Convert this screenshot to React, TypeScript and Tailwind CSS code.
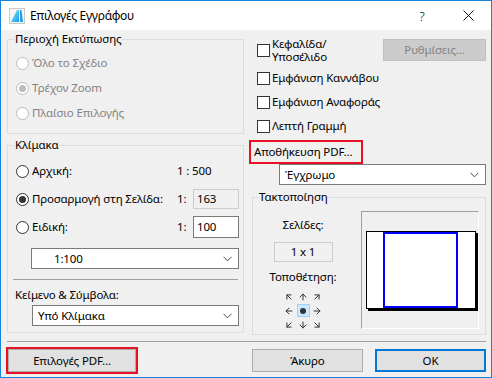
import { ArrowUpLeft, ArrowUp, ArrowUpRight, ArrowLeft, ArrowRight, ArrowDownLeft, ArrowDown, ArrowDownRight } from 'lucide-react';

function Radio({ label, checked, disabled }: { label: string; checked?: boolean; disabled?: boolean }) {
  return (
    <div className="flex items-center h-full">
      <span className={`ml-[1px] w-[13px] h-[13px] rounded-full border bg-white flex items-center justify-center shrink-0 ${disabled ? 'border-[#bcbcbc]' : 'border-[#333333]'}`}>
        {checked && <span className={`w-[7px] h-[7px] rounded-full ${disabled ? 'bg-[#bcbcbc]' : 'bg-[#333333]'}`} />}
      </span>
      <span className={`ml-[3px] whitespace-nowrap ${disabled ? 'text-[#838383]' : 'text-black'}`}>{label}</span>
    </div>
  );
}

function Check({ children }: { children: React.ReactNode }) {
  return (
    <div className="flex items-center">
      <span className="w-[13px] h-[13px] border border-[#333333] bg-white shrink-0" />
      <span className="ml-[2px] whitespace-nowrap">{children}</span>
    </div>
  );
}

function Chevron() {
  return (
    <svg width="9" height="6" viewBox="0 0 9 6" className="shrink-0">
      <path d="M0.5 0.8 L4.5 4.8 L8.5 0.8" fill="none" stroke="#444" strokeWidth="1" />
    </svg>
  );
}

function Select({ value, className, textPad }: { value: string; className?: string; textPad: string }) {
  return (
    <div className={`h-[21px] border border-[#7a7a7a] bg-white flex items-center pr-[6px] ${className ?? ''}`}>
      <span className={`flex-1 ${textPad}`}>{value}</span>
      <Chevron />
    </div>
  );
}

function Btn({ label, className }: { label: string; className?: string }) {
  return (
    <div className={`h-[23px] bg-[#e1e1e1] flex items-center justify-center ${className ?? ''}`}>{label}</div>
  );
}

export default function App() {
  const arrows = [ArrowUpLeft, ArrowUp, ArrowUpRight, ArrowLeft, null, ArrowRight, ArrowDownLeft, ArrowDown, ArrowDownRight];

  return (
    <div className="w-[492px] h-[378px] border border-[#1883d7] bg-[#f0f0f0] flex flex-col font-['Noto_Sans',sans-serif] text-[11.5px] tracking-[-0.15px] leading-[16px] text-black overflow-hidden">
      {/* title bar */}
      <div className="h-[29px] bg-white flex items-center shrink-0 text-[12px]">
        <svg width="16" height="16" viewBox="0 0 16 16" className="ml-[8px]">
          <defs>
            <linearGradient id="ac" x1="0" y1="0" x2="1" y2="1">
              <stop offset="0" stopColor="#8ff0ff" />
              <stop offset="1" stopColor="#1597e5" />
            </linearGradient>
          </defs>
          <rect x="0.5" y="0.5" width="15" height="15" fill="#f6f6f6" stroke="#c9c9c9" />
          <polygon points="2,14 8,2 10,2 10,14" fill="url(#ac)" />
          <polygon points="11,2 12.5,2 14,14 11,14" fill="#1aa0e6" />
        </svg>
        <span className="ml-[5px] tracking-[-0.3px]">Επιλογές Εγγράφου</span>
        <div className="ml-auto flex h-full">
          <div className="w-[46px] flex items-center justify-center text-[13px] font-light">?</div>
          <div className="w-[46px] flex items-center justify-center">
            <svg width="11" height="11" viewBox="0 0 11 11">
              <path d="M0.5 0.5 L10.5 10.5 M10.5 0.5 L0.5 10.5" stroke="#111" strokeWidth="1" />
            </svg>
          </div>
        </div>
      </div>

      {/* body */}
      <div className="flex pl-[6px] pt-[1px] shrink-0">
        {/* left column */}
        <div className="w-[237px] flex flex-col">
          <fieldset className="border border-[#dcdcdc] pl-[7px] pr-[4px] pt-[6px] pb-[10px]">
            <legend className="px-[1px] -ml-[1px]">Περιοχή Εκτύπωσης</legend>
            <div className="flex flex-col gap-[5px]">
              <div className="h-[20px]"><Radio label="Όλο το Σχέδιο" disabled /></div>
              <div className="h-[20px]"><Radio label="Τρέχον Zoom" disabled checked /></div>
              <div className="h-[20px]"><Radio label="Πλαίσιο Επιλογής" disabled /></div>
            </div>
          </fieldset>

          <fieldset className="mt-[3px] border border-[#dcdcdc] pl-[7px] pr-[4px] pt-[7px] pb-[6px]">
            <legend className="px-[1px] -ml-[1px]">Κλίμακα</legend>
            <div className="flex flex-col gap-[6px]">
              <div className="h-[22px] flex items-center">
                <div className="w-[162px] h-full"><Radio label="Αρχική:" /></div>
                <span>1 : 500</span>
              </div>
              <div className="h-[22px] flex items-center">
                <div className="w-[162px] h-full"><Radio label="Προσαρμογή στη Σελίδα:" checked /></div>
                <span className="w-[16px]">1:</span>
                <div className="w-[46px] h-[20px] border border-[#cccccc] bg-[#f0f0f0] flex items-center pl-[3px]">163</div>
              </div>
              <div className="h-[22px] flex items-center">
                <div className="w-[162px] h-full"><Radio label="Ειδική:" /></div>
                <span className="w-[16px]">1:</span>
                <div className="w-[46px] h-[22px] border border-[#7a7a7a] bg-white flex items-center pl-[3px]">100</div>
              </div>
            </div>
            <Select value="1:100" className="mt-[10px] ml-[16px]" textPad="pl-[22px]" />
            <div className="mt-[10px] h-px bg-[#a0a0a0] -ml-[2px] mr-[1px]" />
            <div className="mt-[7px]">Κείμενο &amp; Σύμβολα:</div>
            <Select value="Υπό Κλίμακα" className="mt-[2px] ml-[17px]" textPad="pl-[5px]" />
          </fieldset>
        </div>

        {/* right column */}
        <div className="w-[237px] ml-[5px] flex flex-col">
          <div className="h-[26px] mt-[6px] pl-[8px] flex items-center">
            <span className="w-[13px] h-[13px] border border-[#333333] bg-white shrink-0" />
            <span className="ml-[2px] w-[64px] leading-[13px]">Κεφαλίδα/ Υποσέλιδο</span>
            <div className="ml-auto w-[103px] h-[22px] bg-[#cccccc] border border-[#bfbfbf] text-[#838383] flex items-center justify-center">Ρυθμίσεις...</div>
          </div>
          <div className="h-[22px] mt-[4px] pl-[8px] flex items-center"><Check>Εμφάνιση Καννάβου</Check></div>
          <div className="h-[22px] mt-[2px] pl-[8px] flex items-center"><Check>Εμφάνιση Αναφοράς</Check></div>
          <div className="h-[22px] mt-[2px] pl-[8px] flex items-center"><Check>Λεπτή Γραμμή</Check></div>
          <div className="mt-[3px] w-[114px] h-[24px] border-2 border-[#e81123] flex items-center pl-[3px]">Αποθήκευση PDF...</div>
          <Select value="Έγχρωμο" className="ml-[30px]" textPad="pl-[5px]" />

          <fieldset className="mt-[4px] ml-[3px] border border-[#dcdcdc] pl-[6px] pr-[6px] pt-[6px] pb-[3px]">
            <legend className="px-[1px] -ml-[1px]">Τακτοποίηση</legend>
            <div className="flex">
              <div className="w-[88px] flex flex-col items-center">
                <div className="mt-[6px]">Σελίδες:</div>
                <div className="mt-[9px] w-[59px] h-[20px] border border-[#cccccc] flex items-center justify-center">1 x 1</div>
                <div className="mt-[7px]">Τοποθέτηση:</div>
                <div className="mt-[5px] grid grid-cols-3 gap-[1px]">
                  {arrows.map((A, i) =>
                    A ? (
                      <div key={i} className="w-[13px] h-[13px] flex items-center justify-center">
                        <A size={10} strokeWidth={2.4} color="#333333" />
                      </div>
                    ) : (
                      <div key={i} className="w-[13px] h-[13px] bg-[#cce8ff] border border-[#99d1ff] flex items-center justify-center">
                        <span className="w-[6px] h-[6px] rounded-full bg-[#333333]" />
                      </div>
                    )
                  )}
                </div>
              </div>
              <div className="ml-[14px] w-[118px] h-[118px] border-t border-l border-[#a0a0a0] border-r-white border-b-white border-r border-b flex flex-col items-center">
                <div className="mt-[19px] ml-[1px] w-[110px] h-[78px] border border-black bg-white shadow-[2px_2px_0_0_#000] flex justify-center">
                  <div className="w-[75px] h-full border-2 border-[#0000ff]" />
                </div>
              </div>
            </div>
          </fieldset>
        </div>
      </div>

      <div className="mt-[6px] ml-[6px] mr-[5px] h-px bg-[#a0a0a0] shrink-0" />

      {/* buttons */}
      <div className="mt-[5px] pl-[5px] flex items-center shrink-0">
        <div className="border-2 border-[#e81123] p-0">
          <Btn label="Επιλογές PDF..." className="w-[128px] border border-[#adadad]" />
        </div>
        <Btn label="Άκυρο" className="ml-[114px] w-[111px] border border-[#adadad]" />
        <Btn label="OK" className="ml-[12px] w-[111px] border-2 border-[#0078d7]" />
      </div>
    </div>
  );
}
